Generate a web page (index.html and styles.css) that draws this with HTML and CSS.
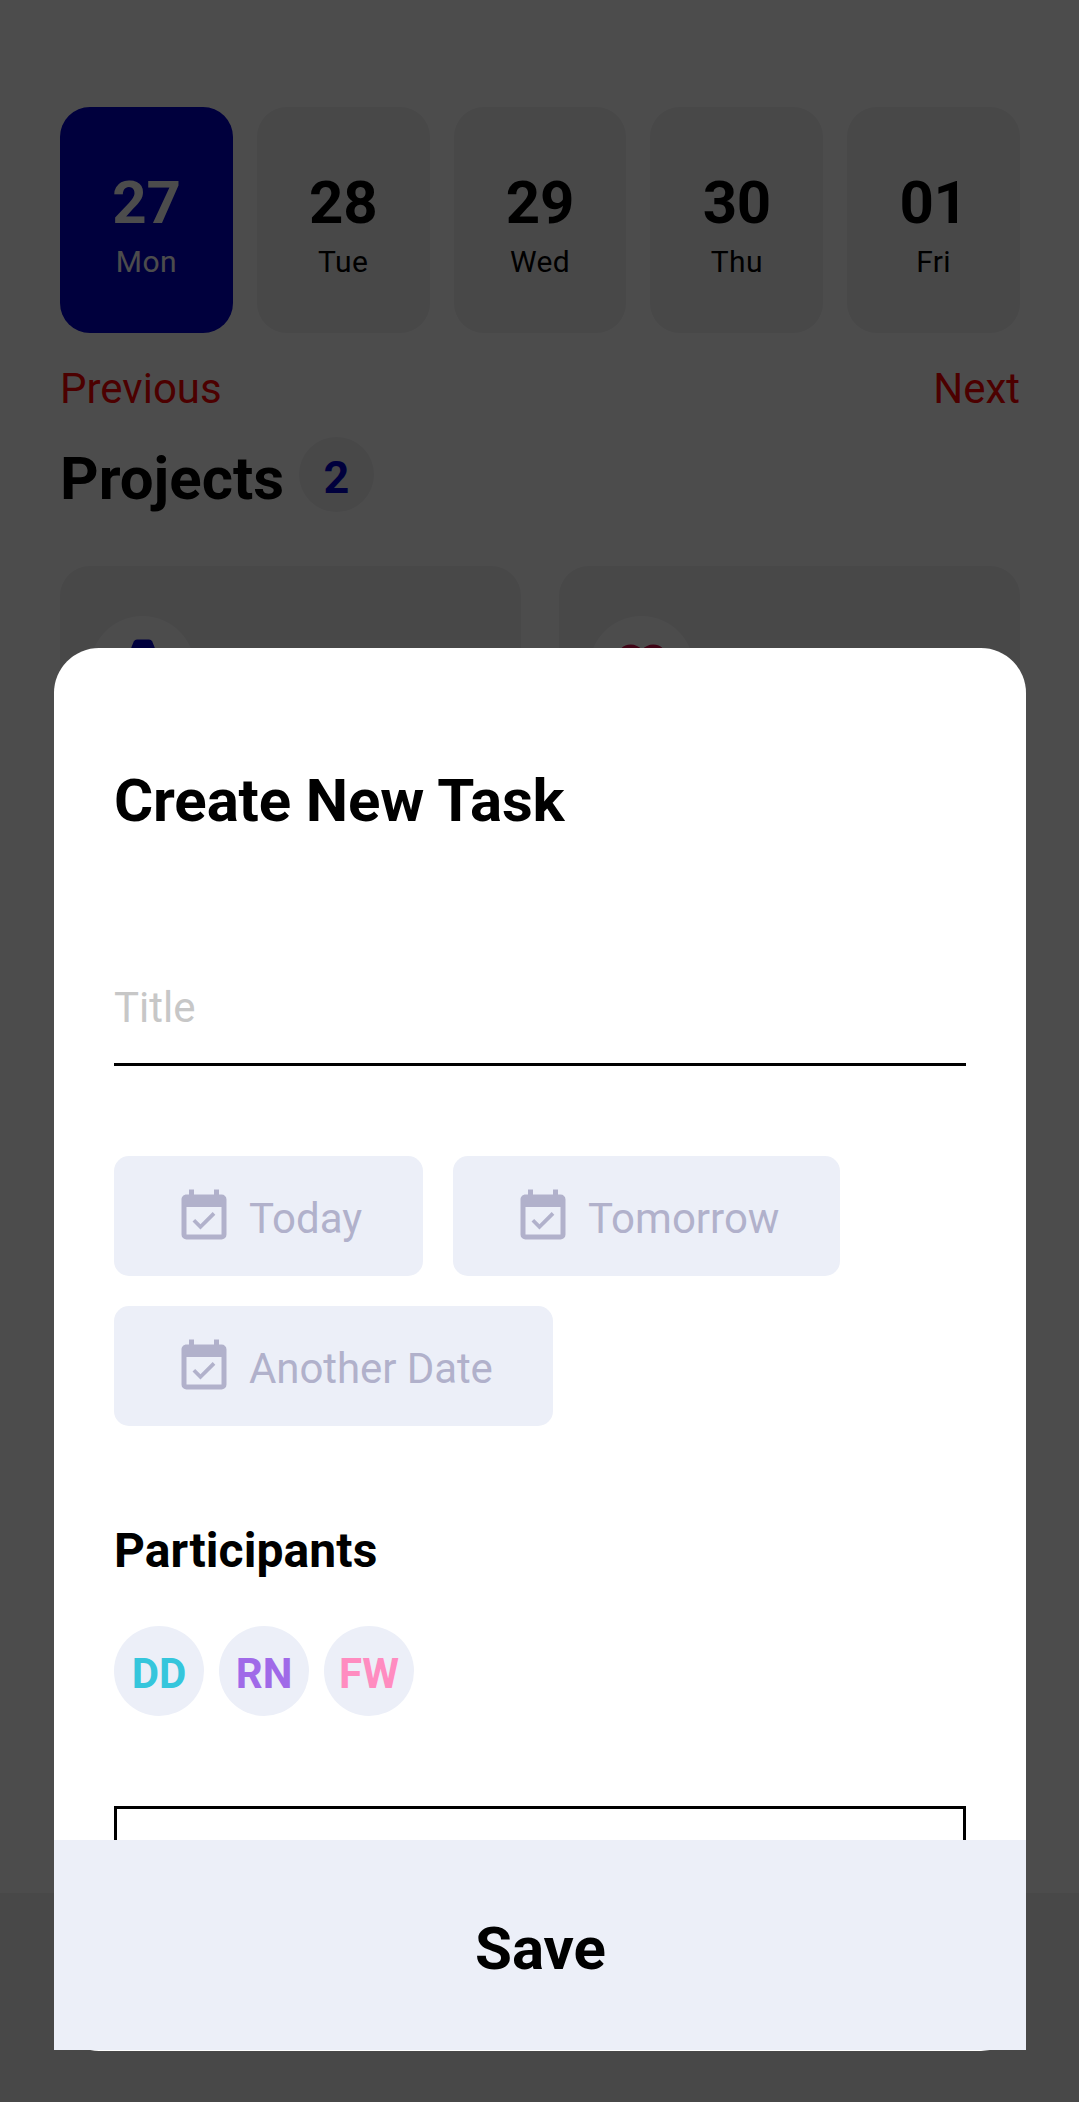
FILE: index.html
```html
<!DOCTYPE html>
<html lang="en">
<head>
<meta charset="utf-8">
<title>Create New Task</title>
<link rel="stylesheet" href="styles.css">
</head>
<body>
<svg class="defs" width="0" height="0" aria-hidden="true">
  <symbol id="cal" viewBox="0 0 24 24"><path d="M19,19H5V8H19M19,3H18V1H16V3H8V1H6V3H5C3.89,3 3,3.9 3,5V19A2,2 0 0,0 5,21H19A2,2 0 0,0 21,19V5A2,2 0 0,0 19,3M16.53,11.06L15.47,10L10.59,14.88L8.47,12.76L7.41,13.82L10.59,17L16.53,11.06Z"/></symbol>
</svg>
<main class="screen">
  <section class="dates">
    <div class="date active"><b>27</b><span>Mon</span></div>
    <div class="date"><b>28</b><span>Tue</span></div>
    <div class="date"><b>29</b><span>Wed</span></div>
    <div class="date"><b>30</b><span>Thu</span></div>
    <div class="date"><b>01</b><span>Fri</span></div>
  </section>
  <nav class="pager"><span>Previous</span><span>Next</span></nav>
  <header class="projects-head"><h2>Projects</h2><span class="count">2</span></header>
  <section class="projects">
    <article class="project"><div class="disc blue"><svg viewBox="0 0 24 24"><path d="M9.6 1H14.4Q15.3 1 15.7 1.8L16.6 4L21 20H3L7.4 4L8.3 1.8Q8.7 1 9.6 1Z"/></svg></div></article>
    <article class="project"><div class="disc red"><svg viewBox="0 0 24 24"><path d="M12,21.35L10.55,20.03C5.4,15.36 2,12.27 2,8.5C2,5.41 4.42,3 7.5,3C9.24,3 10.91,3.81 12,5.08C13.09,3.81 14.76,3 16.5,3C19.58,3 22,5.41 22,8.5C22,12.27 18.6,15.36 13.45,20.03L12,21.35Z"/></svg></div></article>
  </section>
  <footer class="tabbar"></footer>
</main>
<div class="overlay">
  <section class="modal">
    <div class="form">
      <h1>Create New Task</h1>
      <div class="field">Title</div>
      <div class="chips">
        <div class="chip"><svg><use href="#cal"/></svg><span>Today</span></div>
        <div class="chip"><svg><use href="#cal"/></svg><span>Tomorrow</span></div>
        <div class="chip long"><svg><use href="#cal"/></svg><span>Another Date</span></div>
      </div>
      <h3>Participants</h3>
      <div class="people">
        <span class="person cyan">DD</span>
        <span class="person violet">RN</span>
        <span class="person pink">FW</span>
      </div>
      <div class="notes"></div>
    </div>
    <div class="save">Save</div>
  </section>
</div>
</body>
</html>
```
FILE: styles.css
```css
* { box-sizing: border-box; }
body { margin: 0; font-family: Roboto, "Liberation Sans", sans-serif; color: #000; background: #fff; }
h1, h2, h3 { margin: 0; font-weight: 700; }
.defs { display: block; position: absolute; }
.screen { height: 2102px; padding: 107px 59px 0 60px; display: flex; flex-direction: column; overflow: hidden; }
.dates { display: flex; justify-content: space-between; }
.date { width: 18%; height: 226px; padding-top: 56px; border-radius: 30px; background: #f0f0f2; display: flex; flex-direction: column; align-items: center; }
.date b { font-size: 60px; line-height: 80px; letter-spacing: -0.3px; }
.date span { font-size: 30px; line-height: 38px; letter-spacing: 0.4px; }
.date.active { background: #0000cd; color: #fff; }
.pager { display: flex; justify-content: space-between; margin-top: 26px; font-size: 42px; line-height: 60px; color: #f00; }
.projects-head { display: flex; gap: 15px; margin-top: 20px; height: 80px; }
.projects-head h2 { font-size: 60px; line-height: 80px; }
.count { width: 75px; height: 75px; margin-top: -2px; padding-top: 3px; border-radius: 50%; background: #f0f0f2; color: #0000cd; font-size: 45px; font-weight: 700; line-height: 75px; text-align: center; }
.projects { display: flex; justify-content: space-between; margin-top: 47px; }
.project { width: 48%; height: 400px; padding: 50px 30px; border-radius: 30px; background: #f0f0f2; }
.disc { width: 105px; height: 105px; border-radius: 50%; background: #fff; display: flex; align-items: center; justify-content: center; }
.disc svg { width: 60px; height: 60px; margin-bottom: 4px; fill: #0000cd; }
.disc.red svg { fill: #d4104a; }
.tabbar { height: 209px; flex: none; margin: auto -59px 0 -60px; background: #f0f0f2; }
.overlay { position: absolute; inset: 0 0 auto; height: 2102px; padding: 648px 53px 51px 54px; background: rgba(0, 0, 0, .7); }
.modal { height: 1403px; border-radius: 45px; background: #fff; display: flex; flex-direction: column; }
.form { height: 1192px; padding: 113px 60px 0; overflow: hidden; }
h1 { font-size: 60px; line-height: 80px; letter-spacing: -0.15px; }
.field { height: 89px; margin-top: 136px; border-bottom: 3px solid #000; font-size: 42px; line-height: 61px; color: #c7c7c7; }
.chips { display: flex; flex-wrap: wrap; gap: 30px; margin-top: 90px; }
.chip { height: 120px; padding: 31px 61px 29px 60px; border-radius: 15px; background: #eceff8; display: flex; gap: 15px; color: #b1b1cb; font-size: 42px; }
.chip.long { padding-right: 60px; letter-spacing: -0.08px; }
.chip svg { width: 60px; height: 60px; fill: currentColor; }
.chip span { line-height: 64px; }
h3 { margin-top: 95px; font-size: 48px; line-height: 60px; letter-spacing: 0.1px; }
.people { display: flex; gap: 15px; margin-top: 45px; }
.person { width: 90px; height: 90px; border-radius: 50%; background: #eceff8; font-size: 42px; font-weight: 700; line-height: 95px; text-align: center; }
.cyan { color: #35c6dc; }
.violet { color: #a06ae8; }
.pink { color: #ff8cc0; }
.notes { height: 300px; margin-top: 90px; border: 3px solid #000; }
.save { height: 210px; padding-left: 1px; background: #eceff8; font-size: 60px; font-weight: 700; line-height: 217px; text-align: center; overflow: hidden; }
```
